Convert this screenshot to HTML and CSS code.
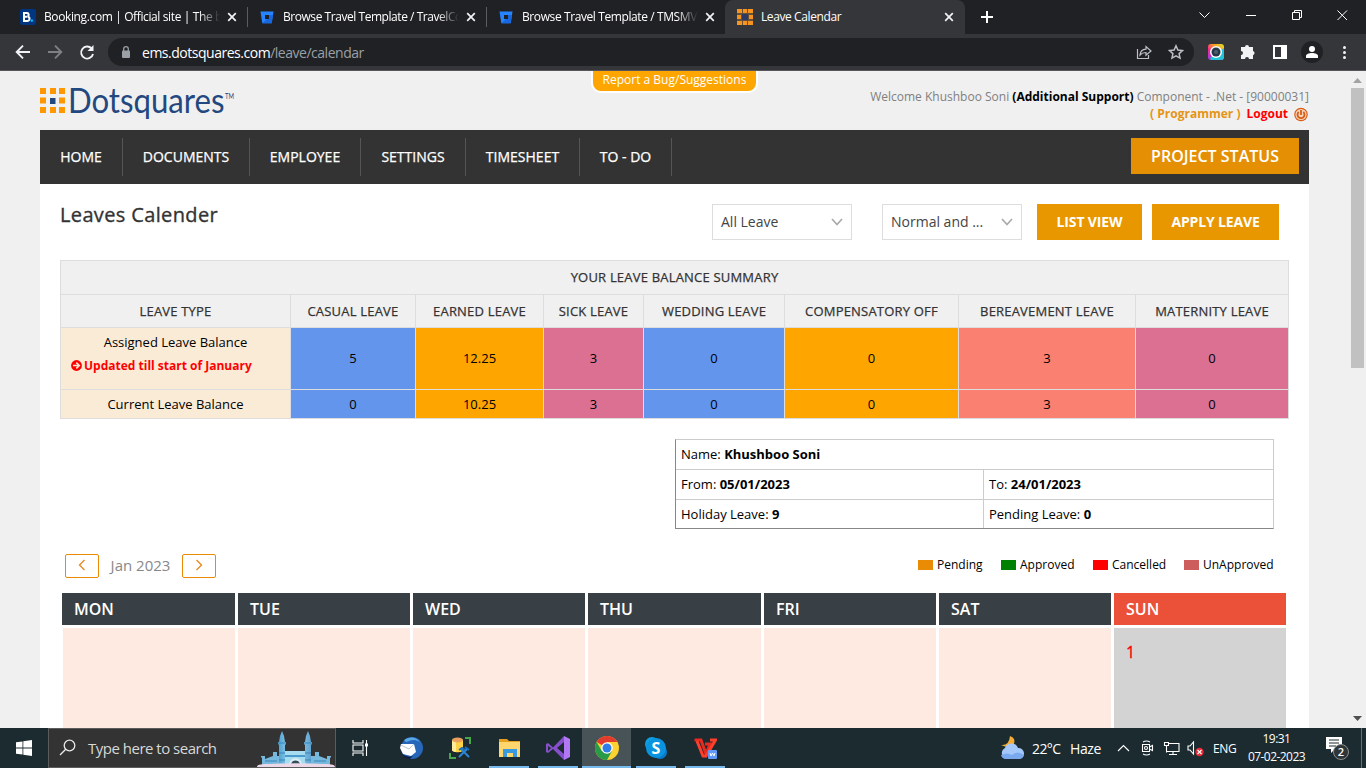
FILE: index.html
```html
<!DOCTYPE html>
<html lang="en">
<head>
<meta charset="utf-8">
<title>Leave Calendar</title>
<link rel="stylesheet" href="styles.css">
</head>
<body>
<div class="tabs">
  <div class="tab tab-a">
    <svg width="16" height="16" viewBox="0 0 16 16"><rect width="16" height="16" rx="2" fill="#003580"/><path d="M4 4h2.800a1.800 1.800 0 0 1 .7 3.500A2.200 2.200 0 0 1 7 12H4zM4 7.700h3" fill="none" stroke="#fff" stroke-width="2"/><circle cx="11.800" cy="11.600" r="1.300" fill="#00baf2"/></svg>
    <span class="tab-title fade">Booking.com | Official site | The b</span>
    <svg class="close" width="10" height="10" viewBox="0 0 10 10"><path d="M1.200 1.200l7.600 7.600M8.800 1.200L1.200 8.800"/></svg>
  </div>
  <div class="tab tab-b">
    <svg width="16" height="16" viewBox="0 0 16 16"><path d="M1.500 2.500h13l-1.800 11.700H3.300z" fill="#2684ff"/><path d="M10 6h4l-1.300 8.200H3.500L8 10h2z" fill="#1767df"/><rect x="6" y="6" width="4" height="4" fill="#202124"/></svg>
    <span class="tab-title fade">Browse Travel Template / TravelCo</span>
    <svg class="close" width="10" height="10" viewBox="0 0 10 10"><path d="M1.200 1.200l7.600 7.600M8.800 1.200L1.200 8.800"/></svg>
  </div>
  <div class="tab tab-c">
    <svg width="16" height="16" viewBox="0 0 16 16"><path d="M1.500 2.500h13l-1.800 11.700H3.300z" fill="#2684ff"/><path d="M10 6h4l-1.300 8.200H3.500L8 10h2z" fill="#1767df"/><rect x="6" y="6" width="4" height="4" fill="#202124"/></svg>
    <span class="tab-title fade">Browse Travel Template / TMSMV</span>
    <svg class="close" width="10" height="10" viewBox="0 0 10 10"><path d="M1.200 1.200l7.600 7.600M8.800 1.200L1.200 8.800"/></svg>
  </div>
  <div class="tab tab-on">
    <svg width="16" height="16" viewBox="0 0 16 16"><path d="M0 0h16v16H0z" fill="#655039"/><path d="M0 0h5v4H0zM6 0h4v4H6zM11 0h5v4h-5zM0 6h4v4H0zM12 6h4v4h-4zM0 12h5v4H0zM6 12h4v4H6zM11 12h5v4h-5z" fill="#f79420"/><path d="M5 5h6v6H5z" fill="#2d3a63"/></svg>
    <span class="tab-title">Leave Calendar</span>
    <svg class="close" width="10" height="10" viewBox="0 0 10 10"><path d="M1.200 1.200l7.600 7.600M8.800 1.200L1.200 8.800"/></svg>
  </div>
  <svg class="plus" width="12" height="12" viewBox="0 0 12 12"><path d="M6 0v12M0 6h12" stroke="#fff" stroke-width="2"/></svg>
  <svg class="winctl" width="150" height="14" viewBox="0 0 150 14" fill="none" stroke="#fff"><path d="M.5 4.500l5 5 5-5M47 7.500h10M93.500 4.500h7v7h-7zM95.500 4.500v-2h7v7h-2M138.500 2.500l9.500 9.500M148 2.500l-9.500 9.500"/></svg>
</div>
<div class="toolbar">
  <svg class="navs" width="86" height="20" viewBox="0 0 86 20" fill="none" stroke-width="1.900"><path d="M30 10H17M23 3.700L16.700 10l6.300 6.300" stroke="#f1f3f4"/><path d="M48 10h13M55 3.700l6.300 6.300-6.300 6.300" stroke="#7f8083"/><path d="M91.600 6.500A6 6 0 1 0 93 12" stroke="#f1f3f4"/><path d="M93.500 3v6h-6z" fill="#f1f3f4"/></svg>
  <div class="omnibox">
    <svg width="10" height="12" viewBox="0 0 10 12"><rect x="1" y="4.500" width="8" height="7.500" rx="1" fill="#9aa0a6"/><path d="M2.700 5V3a2.300 2.300 0 0 1 4.600 0v2" fill="none" stroke="#9aa0a6" stroke-width="1.300"/></svg>
    <span class="url">ems.dotsquares.com<span>/leave/calendar</span></span>
    <svg class="share" width="48" height="16" viewBox="0 0 48 16" fill="none" stroke="#bdc1c6" stroke-width="1.200"><path d="M1.500 5v9.500h11V11M4 11c.3-4 2.500-5.700 6-5.800V2.500l5 4.500-5 4.200V8.500C7.500 8.500 5.500 9.200 4 11z"/><path d="M40 1.800l1.900 4.200 4.600.5-3.400 3.100.9 4.500-4-2.300-4 2.300.9-4.500-3.400-3.100 4.600-.5z" stroke-width="1.500"/></svg>
  </div>
  <svg class="ext" width="158" height="24" viewBox="0 0 158 24"><defs><linearGradient id="cam" x1="0" y1="1" x2="1" y2="0"><stop offset="0" stop-color="#a13bff"/><stop offset=".35" stop-color="#f32d88"/><stop offset=".65" stop-color="#ff9b22"/><stop offset="1" stop-color="#d6e82a"/></linearGradient></defs>
    <rect x="8" y="4" width="16" height="16" rx="3" fill="url(#cam)"/><path d="M24 8v9a3 3 0 0 1-3 3H11l-1-2z" fill="#22c4dc"/><circle cx="16" cy="12" r="6" fill="#fff"/><circle cx="16" cy="12" r="4.500" fill="#26384a"/><circle cx="16" cy="12" r="2" fill="#49606e"/>
    <path d="M41 7h4a2 2 0 0 1 4 0h4v4a2.200 2.200 0 0 1 0 4.200V19h-4a2 2 0 0 0-4 0h-4v-4a2 2 0 0 0 0-4z" fill="#f1f3f4"/>
    <path d="M73 5h14v14H73zM75 7v10h6V7z" fill="#fff" fill-rule="evenodd"/><circle cx="112" cy="12" r="11" fill="#202124"/><circle cx="112" cy="9" r="3" fill="#fff"/><path d="M106 18v-2c0-4 12-4 12 0v2z" fill="#fff"/><g fill="#f1f3f4"><circle cx="144.500" cy="7.500" r="1.500"/><circle cx="144.500" cy="12.500" r="1.500"/><circle cx="144.500" cy="17.500" r="1.500"/></g></svg>
</div>
<div class="view">
  <div class="page">
    <a class="bug">Report a Bug/Suggestions</a>
    <header class="head">
      <svg class="logo" width="196" height="38" viewBox="0 0 196 38"><path d="M0 1h6v6H0zM10 1h6v6h-6zM19 1h6v6h-6zM0 10.500h6v6H0zM19 10.500h6v6h-6zM0 20h6v6H0zM10 20h6v6h-6zM19 20h6v6h-6z" fill="#ff9800"/><path d="M10 11h5.500v6H10z" fill="#234880"/><text class="logo-text" x="28" y="26" textLength="156.500" lengthAdjust="spacingAndGlyphs">Dotsquares</text><text class="logo-tm" x="185" y="12" textLength="9" lengthAdjust="spacingAndGlyphs">TM</text></svg>
      <div class="who">
        <div class="who1">Welcome Khushboo Soni <b>(Additional Support)</b> Component - .Net - [90000031]</div>
        <div class="who2"><b class="role">( Programmer )</b><b class="logout">Logout</b><svg width="14" height="15" viewBox="0 0 14 15"><circle cx="7" cy="7.500" r="6.800" fill="#d95c15"/><circle cx="7" cy="7.500" r="5.600" fill="#f5d6bd"/><path d="M4.700 5a3.500 3.500 0 1 0 4.600 0M7 3v5" fill="none" stroke="#d95c15" stroke-width="1.800"/></svg></div>
      </div>
    </header>
    <nav class="menu"><a>HOME</a><a>DOCUMENTS</a><a>EMPLOYEE</a><a>SETTINGS</a><a>TIMESHEET</a><a>TO - DO</a><button class="status">PROJECT STATUS</button></nav>
    <main class="main">
      <div class="bar">
        <h1>Leaves Calender</h1>
        <div class="select s1"><span>All Leave</span><svg width="12" height="8" viewBox="0 0 12 8"><path d="M1 1l5 5.500L11 1"/></svg></div>
        <div class="select s2"><span>Normal and ...</span><svg width="12" height="8" viewBox="0 0 12 8"><path d="M1 1l5 5.500L11 1"/></svg></div>
        <button class="btn b1">LIST VIEW</button><button class="btn b2">APPLY LEAVE</button>
      </div>
      <div class="balance">
        <div class="h all">YOUR LEAVE BALANCE SUMMARY</div>
        <div class="h">LEAVE TYPE</div><div class="h">CASUAL LEAVE</div><div class="h">EARNED LEAVE</div><div class="h">SICK LEAVE</div><div class="h">WEDDING LEAVE</div><div class="h">COMPENSATORY OFF</div><div class="h">BEREAVEMENT LEAVE</div><div class="h">MATERNITY LEAVE</div>
        <div class="type"><div>Assigned Leave Balance</div><div class="upd"><svg width="11" height="11" viewBox="0 0 11 11"><circle cx="5.500" cy="5.500" r="5.400" fill="red"/><path d="M2 5.500h6M5.300 2.600l3 2.900-3 2.900" fill="none" stroke="#faebd7" stroke-width="1.600"/></svg>Updated till start of January</div></div>
        <div class="blue tall">5</div><div class="orange tall">12.25</div><div class="violet tall">3</div><div class="blue tall">0</div><div class="orange tall">0</div><div class="salmon tall">3</div><div class="violet tall">0</div>
        <div class="type cur">Current Leave Balance</div><div class="blue">0</div><div class="orange">10.25</div><div class="violet">3</div><div class="blue">0</div><div class="orange">0</div><div class="salmon">3</div><div class="violet">0</div>
      </div>
      <div class="info">
        <div class="wide">Name: <b>Khushboo Soni</b></div>
        <div>From: <b>05/01/2023</b></div><div>To: <b>24/01/2023</b></div>
        <div>Holiday Leave: <b>9</b></div><div>Pending Leave: <b>0</b></div>
      </div>
      <div class="month">
        <button class="step"><svg width="8" height="12" viewBox="0 0 8 12"><path d="M6.500 1L1.500 6l5 5"/></svg></button><span class="mname">Jan 2023</span><button class="step"><svg width="8" height="12" viewBox="0 0 8 12"><path d="M1.500 1l5 5-5 5"/></svg></button>
        <div class="legend"><span class="l1"><i class="pend"></i>Pending</span><span class="l2"><i class="appr"></i>Approved</span><span class="l3"><i class="canc"></i>Cancelled</span><span class="l4"><i class="unap"></i>UnApproved</span></div>
      </div>
      <div class="cal">
        <div class="d">MON</div><div class="d">TUE</div><div class="d">WED</div><div class="d">THU</div><div class="d">FRI</div><div class="d">SAT</div><div class="d sun">SUN</div>
        <div class="c first"></div><div class="c"></div><div class="c"></div><div class="c"></div><div class="c"></div><div class="c"></div><div class="c off">1</div>
      </div>
    </main>
  </div>
  <div class="scroll"><svg width="9" height="5" viewBox="0 0 9 5"><path d="M0 5l4.500-5L9 5z" fill="#a3a3a3"/></svg><div class="thumb"></div><svg class="down" width="9" height="5" viewBox="0 0 9 5"><path d="M0 0l4.500 5L9 0z" fill="#505050"/></svg></div>
</div>
<footer class="task">
  <div class="start"><svg width="16" height="16" viewBox="0 0 16 16"><path d="M0 2.300L6.500 1.400v6.200H0zM7.300 1.300L16 0v7.600H7.300zM0 8.400h6.500v6.200L0 13.700zM7.300 8.400H16V16l-8.700-1.300z" fill="#fff"/></svg></div>
  <div class="search">
    <svg class="glass" width="17" height="18" viewBox="0 0 17 18" fill="none" stroke="#e8e8e8" stroke-width="1.300"><circle cx="10.500" cy="6.500" r="5.300"/><path d="M6.700 10.300L1 16"/></svg>
    <span>Type here to search</span>
    <svg class="castle" width="78" height="38" viewBox="0 0 78 38"><defs><linearGradient id="tw"><stop offset="0" stop-color="#4e9fd0"/><stop offset=".45" stop-color="#a9e2f6"/><stop offset="1" stop-color="#5b9fce"/></linearGradient></defs><path d="M5 36v-7l-1-1v-1h4v3l8-3v-4h4v4h38v-4h4v4l8 3v-3h4v1l-1 1v7z" fill="#76b9dc"/><path d="M28 22h21v13H28z" fill="#a5dcf0"/><path d="M28 26h21v2H28z" fill="#4a9acb"/><path d="M32 36c0-9 13-9 13 0z" fill="#d9edf5"/><path d="M34 36c0-6 9-6 9 0z" fill="#364c59"/><path d="M22 34V16l-1-1v-2h1l1-6 2-5 2 5 1 6h1v2l-1 1v18zM48 34V16l-1-1v-2h1l1-6 2-5 2 5 1 6h1v2l-1 1v18z" fill="url(#tw)"/><path d="M21 14h8M47 14h8M22 24h6M48 24h6M22 31h6M48 31h6M8 32h12M57 32h12" stroke="#3985b9"/><path d="M0 38c0-3 6-3 12-3 18-1 36-1 54 0 6 0 12 0 12 3z" fill="#edd8e8"/></svg>
  </div>
  <div class="app view-i"><svg width="18" height="16" viewBox="0 0 18 16" fill="none" stroke="#fff" stroke-width="1.100"><path d="M1 0v3h10V0M1 16v-3h10v3M1 5h10v6H1zM14.500 0v16"/><path d="M13 3.500h3v3h-3z" fill="#fff" stroke="none"/></svg></div>
  <div class="app"><svg width="24" height="24" viewBox="0 0 24 24"><circle cx="13" cy="12" r="11" fill="#2866ba"/><path d="M5 4a11 11 0 0 1 16 2c-7-4-10-1-14 0z" fill="#59a9e8"/><path d="M1 12l1-4 13 0 2 8-5 4-8-2z" fill="#fff"/><path d="M2 9l8 4 5-5" fill="none" stroke="#bcc5d1"/><path d="M3 18q6 4 11 2l-3 3q-5 0-8-5z" fill="#101c48"/></svg></div>
  <div class="app"><svg width="24" height="24" viewBox="0 0 24 24"><path d="M4 4v10c0 3 11 3 11 0V4z" fill="#ffd144"/><path d="M4 4h4v12q-4-1-4-2z" fill="#ffeaa0"/><ellipse cx="9.500" cy="4" rx="5.500" ry="2.500" fill="#eca05e"/><path d="M17 2h5v6M2 17v5h6" fill="none" stroke="#4aa64c" stroke-width="2"/><path d="M11 21l8-8M13 13l8 8" stroke="#2d88d4" stroke-width="2"/><path d="M11 14l3-2 3 2M17 11l4 3" fill="none" stroke="#1970bd" stroke-width="2"/></svg></div>
  <div class="app run"><svg width="24" height="24" viewBox="0 0 24 24"><path d="M2 3h8l2 2h11v16H2z" fill="#e69f1f"/><path d="M2 6h21v15H2z" fill="#ffd66e"/><path d="M6 21v-8h14v8h-4v-4h-6v4z" fill="#3899df"/></svg></div>
  <div class="app run"><svg width="24" height="24" viewBox="0 0 24 24"><path d="M18 0l6 3v18l-6 3z" fill="#b078f5"/><path d="M18 0L7 11.500 2 7 0 8v8l2 1 5-4L18 24v-6l-7-6 7-6zM2 10l3 2-3 3z" fill="#8650cb" fill-rule="evenodd"/></svg></div>
  <div class="app run on"><svg width="24" height="24" viewBox="0 0 24 24"><circle cx="12" cy="12" r="12" fill="#fdd12f"/><path d="M1.600 6A12 12 0 0 1 22.400 6H12v6z" fill="#e33b2e"/><path d="M1.600 6A12 12 0 0 0 12 24l5-9-10.200 0z" fill="#299b46"/><circle cx="12" cy="12" r="5.800" fill="#fff"/><circle cx="12" cy="12" r="4.500" fill="#2f7de9"/></svg></div>
  <div class="app run"><svg width="24" height="24" viewBox="0 0 24 24"><circle cx="8" cy="8" r="7" fill="#129fe0"/><circle cx="16" cy="16" r="7" fill="#087acc"/><circle cx="12" cy="12" r="10" fill="#0a94df"/><text class="skype" x="12" y="18" text-anchor="middle">S</text></svg></div>
  <div class="app run"><svg width="24" height="24" viewBox="0 0 24 24" fill="none"><path d="M1.500 4H8l5 14 4-10h-5" stroke="#e72b20" stroke-width="3"/><path d="M4 5l6 15h3L22.500 4H17" stroke="#ff3f2c" stroke-width="3"/><rect x="15" y="14" width="9" height="9" rx="1" fill="#609cf7"/><path d="M17 17l1 3 1.500-3 1.500 3 1-3" stroke="#fff"/></svg></div>
  <div class="tray">
    <svg width="25" height="24" viewBox="0 0 25 24"><path d="M10 0q6 2 4 8l-5 4-8-3q8 1 9-9z" fill="#f5ad36"/><path d="M6 23a6 6 0 0 1-1-11 7 7 0 0 1 13 0 5.500 5.500 0 0 1 1 11z" fill="#a4c8fa"/><path d="M1 19q6-3 11 0 5-5 12 0-1 4-5 4H6q-4 0-5-4z" fill="#7ba9ed"/></svg>
    <span class="temp">22°C</span><span class="haze">Haze</span>
    <svg class="sys" width="90" height="18" viewBox="0 0 90 18" fill="none" stroke="#fff" stroke-width="1.100"><path d="M1 12l5.500-5.500L12 12M25.500 5.500h7v7h-7zM32.500 8l3-1.500v5l-3-1.500M26 3q3.500-2 7 0M26 15q3.500 2 7 0"/><circle cx="29" cy="9" r="1.500"/><path d="M52 4.500h10v8H50M56 12.500v3M52 15.500h8M47.500 3.500h4v3h-4zM49.500 6.500v7M71 7h2l3.500-4v12L73 11h-2z"/><circle cx="82.500" cy="13" r="4.200" fill="#e42d36" stroke="none"/><path d="M80.500 11l4 4M84.500 11l-4 4"/></svg>
    <span class="eng">ENG</span>
    <div class="clock"><span>19:31</span><span class="date">07-02-2023</span></div>
    <svg class="note" width="26" height="26" viewBox="0 0 26 26"><path d="M1 2h16v12h-7l-4 4v-4H1z" fill="#fff"/><path d="M4 5h10M4 8h10M4 11h7" stroke="#1b2b2f"/><circle cx="16" cy="17" r="7.500" fill="#303638" stroke="#8a8f91"/><text class="two" x="16" y="21" text-anchor="middle">2</text></svg>
    <div class="peek"></div>
  </div>
</footer>
</body>
</html>
```
FILE: styles.css
```css
* { box-sizing: border-box; }
body { margin: 0; width: 1366px; height: 768px; overflow: hidden; display: flex; flex-direction: column; font-family: "Open Sans", sans-serif; font-size: 13px; color: #000; }
svg { display: block; flex: none; }
button { border: 0; margin: 0; font-family: inherit; padding: 0; }
.tabs { height: 34px; background: #202124; display: flex; flex: none; align-items: center; color: #fff; font-size: 12px; }
.tab { display: flex; align-items: center; height: 34px; white-space: nowrap; }
.tab-title { flex: 1; overflow: hidden; line-height: 20px; letter-spacing: -.4px; }
.tab-a { width: 248px; padding-left: 20px; padding-right: 11px; }
.tab-a .tab-title, .tab-b .tab-title, .tab-c .tab-title { margin-left: 8px; margin-right: 7px; }
.tab-a .tab-title { letter-spacing: -.38px; }
.tab-b { width: 239px; padding-left: 11px; padding-right: 11px; position: relative; }
.tab-b .tab-title { letter-spacing: -.45px; }
.tab-c { width: 238px; padding-left: 11px; padding-right: 10px; position: relative; }
.tab-b::before, .tab-c::before { content: ""; position: absolute; left: -1px; top: 7px; width: 1px; height: 20px; background: #5b5c60; }
.fade { -webkit-mask-image: linear-gradient(90deg, #000 88%, transparent 100%); mask-image: linear-gradient(90deg, #000 88%, transparent 100%); }
.tab-on { width: 240px; padding-left: 12px; padding-right: 11px; background: #35363a; border-radius: 8px 8px 0 0; }
.tab-on .tab-title { margin-left: 8px; letter-spacing: -.4px; }
.close { stroke: #f1f3f4; stroke-width: 1.7; }
.plus { margin-left: 16px; }
.winctl { margin-left: auto; margin-right: 17px; margin-bottom: 5px; }
.toolbar { height: 37px; flex: none; background: #35363a; border-bottom: 1px solid #57545a; display: flex; align-items: center; }
.navs { margin-right: 22px; overflow: visible; }
.omnibox { width: 1086px; height: 28px; border-radius: 14px; background: #202124; display: flex; align-items: center; padding-left: 13px; }
.url { margin-left: 11px; color: #fff; font-size: 14px; letter-spacing: -.48px; }
.url span { color: #9aa0a6; }
.share { margin-left: auto; margin-right: 10px; }
.ext { margin-left: 6px; }
.view { height: 657px; flex: none; display: flex; background: #f0f0f0; }
.page { width: 1349px; padding: 0 40px; position: relative; overflow: hidden; }
.bug { position: absolute; left: 591px; top: -2px; width: 167px; height: 24px; background: #ffa500; color: #fff; border: 2px solid #fff; border-radius: 0 0 10px 10px; text-align: center; font-size: 12px; line-height: 18px; }
.head { height: 59px; display: flex; justify-content: space-between; }
.logo { margin-top: 16px; }
.logo-text { font-family: Lato, sans-serif; font-size: 35px; fill: #234880; }
.logo-tm { font-family: Lato, sans-serif; font-size: 7px; fill: #234880; }
.who { font-size: 12px; color: #808080; padding-top: 17px; line-height: 17px; white-space: nowrap; }
.who b { color: #000; }
.who2 { display: flex; justify-content: flex-end; }
.who2 svg { margin: 2px 1px 0 6px; }
.who2 .role { color: #e59416; margin-right: 6px; }
.who2 .logout { color: red; }
.menu { height: 54px; background: #333; display: flex; align-items: center; color: #fff; }
.menu a { height: 38px; line-height: 38px; border-right: 1px solid #555; font-size: 14px; text-align: center; -webkit-text-stroke: .25px #fff; }
.menu a:nth-child(1) { width: 83px; }
.menu a:nth-child(2) { width: 127px; }
.menu a:nth-child(3) { width: 111px; }
.menu a:nth-child(4) { width: 105px; }
.menu a:nth-child(5) { width: 114px; }
.menu a:nth-child(6) { width: 92px; }
.status { margin-left: auto; margin-right: 10px; width: 168px; height: 36px; background: #e58f04; color: #fff; font-size: 16px; font-weight: 600; margin-bottom: 2px; }
.main { background: #fff; height: 544px; padding: 20px 20px 0; }
.bar { display: flex; height: 36px; }
h1 { margin: -3px 0 0; font-size: 20px; line-height: 28px; font-weight: 400; color: #333; width: 652px; letter-spacing: .36px; -webkit-text-stroke: .35px #333; }
.select { border: 1px solid #ddd; width: 140px; height: 36px; padding: 0 8px; display: flex; align-items: center; justify-content: space-between; font-size: 14px; color: #444; }
.select span { padding-bottom: 2px; }
.select path { stroke: #aaa; stroke-width: 1.7; fill: none; }
.s2 { margin-left: 30px; }
.btn { background: #e99701; color: #fff; font-size: 14px; font-weight: 700; letter-spacing: -.15px; padding-bottom: 2px; }
.b1 { width: 105px; margin-left: 15px; }
.b2 { width: 127px; margin-left: 10px; }
.balance { margin-top: 20px; width: 1229px; display: grid; grid-template-columns: 229px 124px 127px 99px 140px 173px 176px 152px; grid-template-rows: 33px 32px 61px 28px; gap: 1px; padding: 1px; background: #ddd; }
.balance > div { display: flex; align-items: center; justify-content: center; }
.balance .h { background: #f0f0f0; color: #333; letter-spacing: .2px; -webkit-text-stroke: .25px #333; }
.balance .all { grid-column: 1 / 9; padding-bottom: 2px; }
.balance .tall { padding-bottom: 2px; }
.balance .type { background: #faebd7; }
.balance .type:not(.cur) { flex-direction: column; justify-content: flex-start; padding-top: 3px; line-height: 23px; }
.upd { color: red; font-size: 12px; font-weight: 700; display: flex; align-items: center; gap: 2px; align-self: flex-start; margin-left: 10px; }
.balance .blue { background: #6495ed; }
.balance .orange { background: #ffa500; }
.balance .violet { background: #db7093; }
.balance .salmon { background: #fa8072; }
.info { width: 599px; height: 90px; margin: 20px 0 0 615px; display: grid; grid-template-columns: 307px 1fr; grid-template-rows: 30px 30px 28px; border: 1px solid #ccc; border-left-color: #888; border-bottom-color: #888; font-size: 13px; }
.info div { padding-left: 5px; line-height: 28px; border-bottom: 1px solid #ccc; }
.info div:nth-child(odd) { border-left: 1px solid #ccc; }
.info .wide { grid-column: 1 / 3; border-left: 0 !important; }
.info div:nth-child(n+4) { border-bottom: 0; }
.month { height: 25px; margin-top: 24px; padding-left: 5px; display: flex; align-items: center; }
.step { width: 34px; height: 24px; border: 1px solid #e98b04; border-radius: 2px; background: #fff; display: flex; justify-content: center; padding-top: 4px; margin-top: 1px; }
.step path { fill: none; stroke: #e98b24; stroke-width: 1.4; }
.mname { width: 83px; text-align: center; color: #888; font-size: 15px; padding-bottom: 2px; }
.legend { margin-left: auto; display: flex; font-size: 12px; margin-right: -1px; padding-bottom: 2px; }
.legend span { display: flex; align-items: center; }
.legend i { width: 15px; height: 10px; margin-right: 4px; }
.l1 { width: 83px; }
.l2 { width: 92px; }
.l3 { width: 91px; }
.l4 { width: 106px; }
.pend { background: #e98b04; }
.appr { background: green; }
.canc { background: red; }
.unap { background: #cd5c5c; }
.cal { margin: 15px 0 0 2px; display: grid; grid-template-columns: 173px 172px 172px 173px 172px 172px 172px; gap: 3px; grid-template-rows: 32px 100px; }
.d { background: #394045; color: #fff; font-size: 16px; font-weight: 600; padding-left: 12px; line-height: 32px; }
.sun { background: #eb5138; }
.c { background: #ffeae1; }
.first { margin-left: 1px; }
.off { background: #d3d3d3; color: red; font-size: 16px; padding: 13px 12px; -webkit-text-stroke: .3px red; }
.scroll { width: 17px; display: flex; flex-direction: column; align-items: center; padding: 7px 0; background: #f0f0f0; }
.thumb { width: 13px; height: 280px; margin-top: 5px; background: #c1c1c1; }
.down { margin-top: auto; }
.task { height: 40px; flex: none; background: #1b2b30; color: #fff; display: flex; }
.start { width: 48px; padding: 12px 0 0 16px; }
.search { width: 288px; border: 1px solid #5c5c5c; background: #333; display: flex; align-items: center; font-size: 15px; color: #d8d8d8; }
.glass { margin-left: 10px; }
.search span { margin-left: 12px; letter-spacing: -.5px; }
.castle { margin-left: auto; }
.app { width: 49px; display: flex; align-items: center; justify-content: center; position: relative; }
.view-i { width: 50px; }
.run::after { content: ""; position: absolute; left: 5px; right: 4px; bottom: 0; height: 2px; background: #76b9ed; }
.on { background: #475357; }
.on::after { left: 0; right: 0; }
.skype { font-family: "Open Sans", sans-serif; font-weight: 700; font-size: 16px; fill: #fff; }
.tray { margin-left: auto; display: flex; align-items: center; width: 366px; font-size: 14px; }
.temp { margin-left: 7px; width: 38px; letter-spacing: -.6px; }
.haze { width: 44px; letter-spacing: -.4px; }
.sys { margin-left: 3px; }
.eng { font-size: 12px; margin-left: 6px; letter-spacing: -.4px; width: 23px; }
.clock { width: 65px; margin-left: 8px; display: flex; flex-direction: column; align-items: center; font-size: 12px; line-height: 18px; letter-spacing: -.55px; }
.note { margin-left: 16px; }
.peek { width: 1px; height: 40px; margin-left: auto; margin-right: 4px; background: #657174; }
.two { font-family: "Open Sans", sans-serif; font-size: 11px; font-weight: 600; fill: #fff; }
```
